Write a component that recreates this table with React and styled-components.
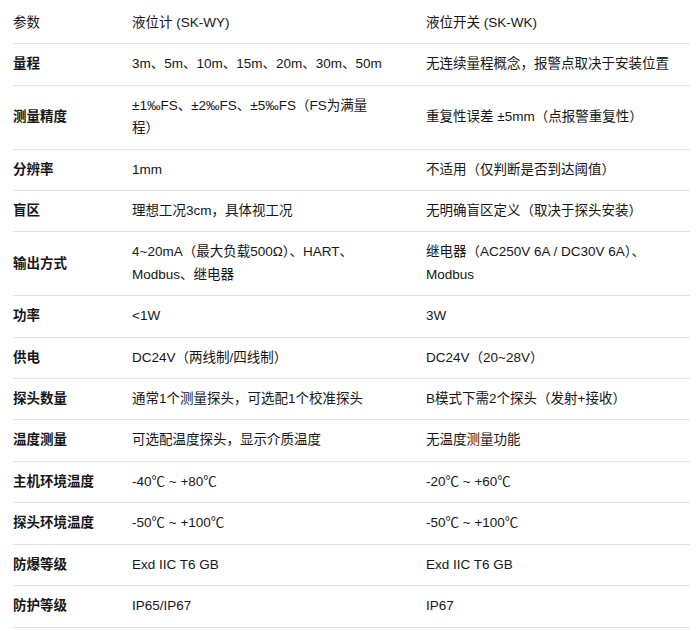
import React from "react";
import styled, { createGlobalStyle } from "styled-components";

const GlobalStyle = createGlobalStyle`
  html, body {
    margin: 0;
    padding: 0;
    background: #ffffff;
  }
  body {
    font-family: "Liberation Sans", Arial, "Noto Sans CJK SC", sans-serif;
    color: #161616;
  }
`;

const Page = styled.div`
  padding: 3px 10px 0 13px;
`;

const Table = styled.table`
  width: 677px;
  border-collapse: collapse;
  table-layout: fixed;
  font-size: 13.5px;
  line-height: 22.4px;
`;

const Col = styled.col`
  width: ${(p) => p.$w}px;
`;

const Row = styled.tr`
  border-bottom: 1px solid #e3e3e3;
`;

const Cell = styled.td`
  padding: 9px 20px 9px 16px;
  vertical-align: middle;
  text-align: left;
  font-weight: 400;
  &:first-child {
    padding-left: 0;
    padding-right: 16px;
    font-weight: ${(p) => (p.$head ? 400 : 700)};
  }
  &:last-child {
    padding-right: 0;
  }
`;

const rows = [
  ["量程", "3m、5m、10m、15m、20m、30m、50m", "无连续量程概念，报警点取决于安装位置"],
  [
    "测量精度",
    <>±1‰FS、±2‰FS、±5‰FS（FS为满量<br />程）</>,
    "重复性误差 ±5mm（点报警重复性）",
  ],
  ["分辨率", "1mm", "不适用（仅判断是否到达阈值）"],
  ["盲区", "理想工况3cm，具体视工况", "无明确盲区定义（取决于探头安装）"],
  ["输出方式", "4~20mA（最大负载500Ω）、HART、Modbus、继电器", "继电器（AC250V 6A / DC30V 6A）、Modbus"],
  ["功率", "<1W", "3W"],
  ["供电", "DC24V（两线制/四线制）", "DC24V（20~28V）"],
  ["探头数量", "通常1个测量探头，可选配1个校准探头", "B模式下需2个探头（发射+接收）"],
  ["温度测量", "可选配温度探头，显示介质温度", "无温度测量功能"],
  ["主机环境温度", "-40℃ ~ +80℃", "-20℃ ~ +60℃"],
  ["探头环境温度", "-50℃ ~ +100℃", "-50℃ ~ +100℃"],
  ["防爆等级", "Exd IIC T6 GB", "Exd IIC T6 GB"],
  ["防护等级", "IP65/IP67", "IP67"],
];

export default function App() {
  return (
    <>
      <GlobalStyle />
      <Page>
        <Table>
          <colgroup>
            <Col $w={103} />
            <Col $w={294} />
            <Col $w={280} />
          </colgroup>
          <thead>
            <Row>
              <Cell as="th" $head>参数</Cell>
              <Cell as="th" $head>液位计 (SK-WY)</Cell>
              <Cell as="th" $head>液位开关 (SK-WK)</Cell>
            </Row>
          </thead>
          <tbody>
            {rows.map((r) => (
              <Row key={r[0]}>
                <Cell>{r[0]}</Cell>
                <Cell>{r[1]}</Cell>
                <Cell>{r[2]}</Cell>
              </Row>
            ))}
          </tbody>
        </Table>
      </Page>
    </>
  );
}
